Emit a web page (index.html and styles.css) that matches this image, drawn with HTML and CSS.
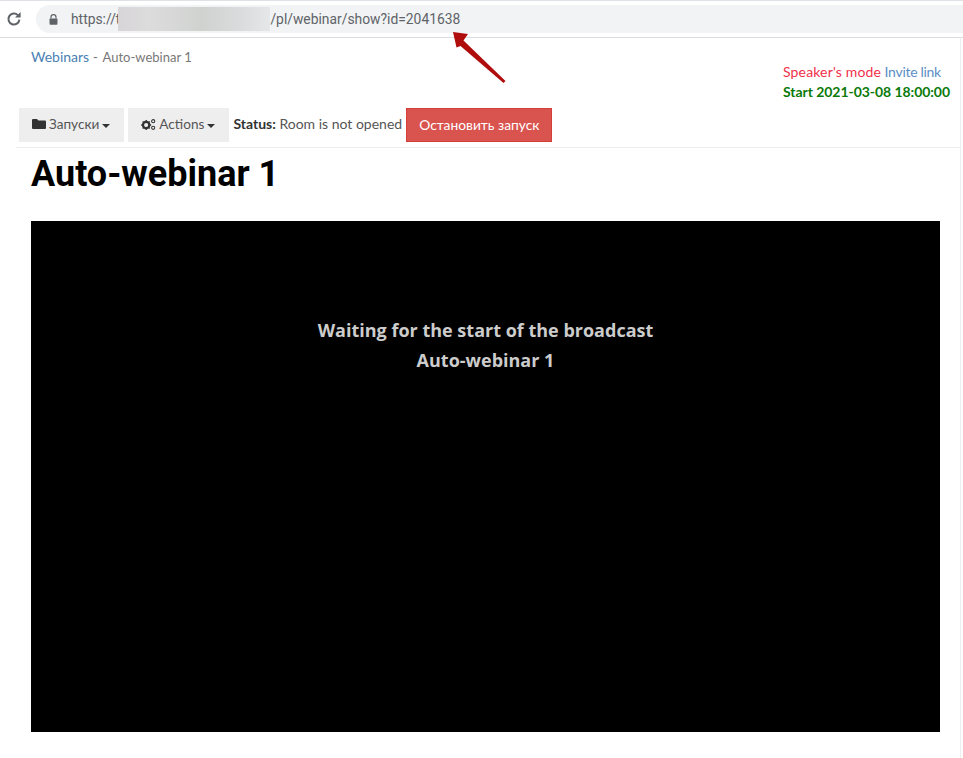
FILE: index.html
```html
<!DOCTYPE html>
<html lang="en">

<head>
    <meta charset="UTF-8">
    <meta name="viewport" content="width=device-width, initial-scale=1.0">
    <title>Auto-webinar 1</title>
    <link rel="stylesheet" href="styles.css">
</head>

<body>
    <header class="browser-bar">
        <svg class="reload" viewBox="0 0 16 16" width="16" height="16">
            <path d="M13.4 8.6a5.5 5.5 0 1 1-1.6-4.5" fill="none" stroke="#5f6368" stroke-width="2"/>
            <path d="M14.6 1v5.6H9z" fill="#5f6368"/>
        </svg>
        <div class="address">
            <svg class="lock" viewBox="0 0 10 12" width="9" height="11">
                <path d="M2.2 5V3.4a2.8 2.8 0 0 1 5.6 0V5" fill="none" stroke="#5f6368" stroke-width="1.3"/>
                <rect x="0.6" y="4.8" width="8.8" height="7" rx="1" fill="#5f6368"/>
            </svg>
            <span class="url">https://t<span class="url-blur"></span>/pl/webinar/show?id=2041638</span>
        </div>
    </header>

    <div class="page">
        <div class="top-row">
            <div class="crumbs"><a href="#">Webinars</a> <span class="sep">-</span> <span class="crumb-current">Auto-webinar 1</span></div>
            <div class="side-links">
                <div><a class="speaker" href="#">Speaker's mode</a> <a class="invite" href="#">Invite link</a></div>
                <div class="start-time">Start 2021-03-08 18:00:00</div>
            </div>
        </div>

        <div class="toolbar">
            <button class="btn">
                <svg viewBox="0 0 14 12" width="14" height="12"><path d="M0 2a1 1 0 0 1 1-1h4l1.4 1.6H13a1 1 0 0 1 1 1V10a1 1 0 0 1-1 1H1a1 1 0 0 1-1-1z" fill="#333"/></svg>
                Запуски <i class="caret"></i>
            </button>
            <button class="btn">
                <svg viewBox="0 0 16 13" width="15" height="13">
                    <circle cx="5.5" cy="7" r="3.4" fill="none" stroke="#333" stroke-width="2.4"/>
                    <path d="M5.5 1.6v2M5.5 10.4v2M.2 7h2M8.8 7h2M1.8 3.3l1.3 1.3M8 9.5l1.3 1.3M1.8 10.7l1.3-1.3M8 4.6l1.3-1.3" stroke="#333" stroke-width="1.5"/>
                    <circle cx="13" cy="3" r="1.7" fill="none" stroke="#333" stroke-width="1.1"/>
                    <circle cx="13" cy="10" r="1.7" fill="none" stroke="#333" stroke-width="1.1"/>
                </svg>
                Actions <i class="caret"></i>
            </button>
            <span class="status"><b>Status:</b> Room is not opened</span>
            <button class="btn-danger">Остановить запуск</button>
        </div>

        <h1 class="title">Auto-webinar 1</h1>

        <div class="player">
            <p>Waiting for the start of the broadcast</p>
            <p>Auto-webinar 1</p>
        </div>
    </div>

    <svg class="arrow" viewBox="0 0 60 55" width="60" height="55">
        <path d="M2 1 L17 3 L12.5 9.5 L54.5 50 L52.5 52 L9.5 15 L5.5 16.5 Z" fill="#b00d0d"/>
    </svg>
</body>

</html>
```

FILE: styles.css
```css
html {
    box-sizing: border-box;
    font-family: "Lato", sans-serif;
    font-size: 14px;
}

*,
*:before,
*:after {
    box-sizing: inherit;
}

body {
    margin: 0;
    height: 758px;
    overflow: hidden;
    background-color: #fff;
    color: #333;
}

a {
    color: #4a7fb5;
    text-decoration: none;
}

.browser-bar {
    height: 38px;
    display: flex;
    align-items: center;
    padding: 0 0 0 6px;
    border-top: 1px solid #dee1e6;
    border-bottom: 1px solid #dadce0;
}

.reload {
    flex-shrink: 0;
}

.address {
    flex-grow: 1;
    height: 28px;
    margin-left: 14px;
    padding-left: 13px;
    display: flex;
    align-items: center;
    border-radius: 14px 0 0 14px;
    background-color: #f1f3f4;
}

.url {
    margin-left: 13px;
    display: flex;
    align-items: center;
    font-family: "Roboto", sans-serif;
    font-size: 13.85px;
    color: #5f6368;
}

.url-blur {
    width: 152px;
    height: 24px;
    margin-left: -2px;
    background: linear-gradient(90deg, #d8d5d8, #dcdcdc 20%, #d0d2d0 55%, #dadbdc 80%, #e6e7e8);
}

.page {
    margin-left: 16px;
    margin-right: 3px;
    height: 720px;
}

.top-row {
    height: 70px;
    display: flex;
    justify-content: space-between;
}

.crumbs {
    padding: 10px 0 0 15px;
    color: #777;
    font-size: 14px;
}

.sep {
    margin-right: 1px;
}

.crumb-current {
    font-size: 13px;
}

.side-links {
    width: 177px;
    padding-top: 24px;
    line-height: 20px;
    font-size: 14px;
}

.speaker {
    color: #f0304a;
    letter-spacing: .15px;
}

.invite {
    color: #5b8ec4;
    letter-spacing: -.3px;
}

.start-time {
    font-weight: 700;
    color: #0a7a0a;
    font-size: 14px;
    letter-spacing: -.05px;
}

.toolbar {
    height: 40px;
    display: flex;
    align-items: flex-start;
    padding-left: 3px;
    border-bottom: 1px solid #eee;
}

.btn {
    height: 34px;
    margin-right: 4px;
    padding: 0 14px 2px 13px;
    display: flex;
    align-items: center;
    gap: 3px;
    border: 0;
    background-color: #eee;
    color: #555;
    font: inherit;
    font-size: 13.6px;
}

.caret {
    display: inline-block;
    margin-top: 3px;
    border-top: 4px solid #333;
    border-left: 4px solid transparent;
    border-right: 4px solid transparent;
}

.status {
    line-height: 31px;
    margin-right: 4px;
    color: #555;
}

.status b {
    color: #333;
}

.btn-danger {
    height: 34px;
    padding: 0 12px 2px;
    border: 1px solid #d43f3a;
    background-color: #d9534f;
    color: #fff;
    font: inherit;
    font-size: 13.8px;
}

.title {
    margin: 4px 0 0 15px;
    font-family: "Roboto", sans-serif;
    font-size: 36px;
    line-height: 44px;
    font-weight: 700;
    color: #000;
}

.player {
    width: 909px;
    height: 511px;
    margin: 25px 0 0 15px;
    padding-top: 94px;
    background-color: #000;
    color: #ccc;
    text-align: center;
    font-family: "Open Sans", sans-serif;
    font-weight: 700;
    font-size: 18px;
    line-height: 30px;
}

.player p {
    margin: 0;
}

.arrow {
    position: absolute;
    left: 451px;
    top: 31px;
}

body:after {
    content: "";
    position: absolute;
    top: 38px;
    left: 960px;
    width: 1px;
    height: 720px;
    background-color: #eee;
}
```
